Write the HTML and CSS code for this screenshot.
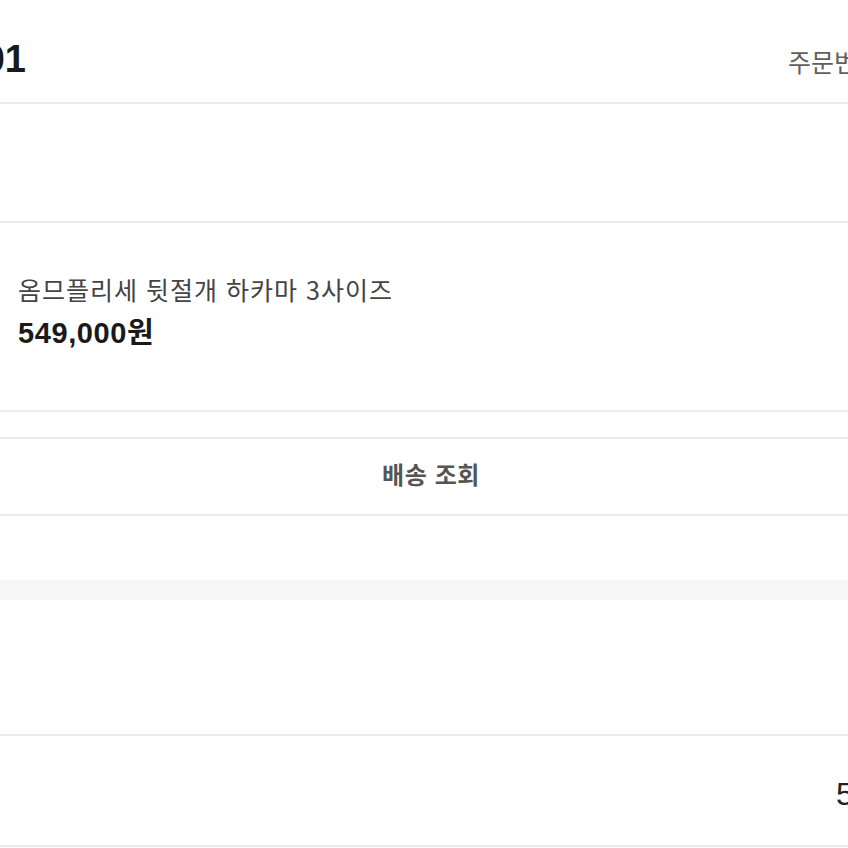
FILE: index.html
```html
<!DOCTYPE html>
<html lang="ko">
<head>
<meta charset="utf-8">
<title>주문 상세</title>
<link rel="stylesheet" href="styles.css">
</head>
<body>
<main class="page">
  <header class="order-head">
    <div class="date-box"><span class="date">2024.03.01</span></div>
    <div class="order-no">주문번호 20240301-0001234</div>
  </header>
  <section class="status"></section>
  <section class="product">
    <p class="product-name">옴므플리세 뒷절개 하카마 3사이즈</p>
    <p class="product-price">549,000원</p>
  </section>
  <div class="btn-wrap">
    <button class="track-btn" type="button">배송 조회</button>
  </div>
  <div class="spacer"></div>
  <div class="band"></div>
  <section class="pay-info"></section>
  <section class="total-row">
    <span class="total-price">549,000원</span>
  </section>
</main>
</body>
</html>
```
FILE: styles.css
```css
* { box-sizing: border-box; }
html, body { margin: 0; padding: 0; background: #fff; }
body {
  overflow: hidden;
  width: 848px;
  height: 848px;
  font-family: "Liberation Sans", "Noto Sans CJK KR", sans-serif;
  color: #1a1a1a;
}
.page { display: flex; flex-direction: column; width: 848px; }
p { margin: 0; }

.order-head {
  display: flex;
  align-items: baseline;
  height: 104px;
  padding-top: 40px;
  border-bottom: 2px solid #ebebeb;
  white-space: nowrap;
}
.date-box {
  width: 26px;
  display: flex;
  justify-content: flex-end;
  flex-shrink: 0;
}
.date {
  font-size: 38px;
  line-height: 38px;
  font-weight: 700;
  color: #1a1a1a;
}
.order-no {
  margin-left: 762px;
  font-family: "Noto Sans CJK KR", sans-serif;
  font-size: 25px;
  color: #5f5f5f;
  flex-shrink: 0;
}

.status {
  height: 119px;
  border-bottom: 2px solid #ebebeb;
}

.product {
  height: 189px;
  padding: 48px 0 0 18px;
  border-bottom: 2px solid #eeeeee;
  white-space: nowrap;
}
.product-name {
  font-family: "Noto Sans CJK KR", sans-serif;
  font-size: 25px;
  line-height: 36px;
  letter-spacing: 1px;
  color: #444;
}
.product-price {
  margin-top: 9px;
  font-size: 29px;
  line-height: 34px;
  font-weight: 700;
  letter-spacing: 0.6px;
  color: #1a1a1a;
}

.btn-wrap { padding-top: 25px; }
.track-btn {
  display: flex;
  align-items: center;
  justify-content: center;
  width: 100%;
  height: 79px;
  margin: 0;
  padding: 0 0 6px 14px;
  background: #fff;
  border: 0;
  border-top: 2px solid #ebebeb;
  border-bottom: 2px solid #ebebeb;
  font-family: "Noto Sans CJK KR", sans-serif;
  font-size: 24px;
  font-weight: 700;
  color: #555;
  letter-spacing: 0.6px;
}

.spacer { height: 64px; }
.band { height: 20px; background: #f6f6f6; }
.pay-info {
  height: 136px;
  border-bottom: 2px solid #ebebeb;
}
.total-row {
  display: flex;
  align-items: center;
  height: 111px;
  border-bottom: 2px solid #ebebeb;
  white-space: nowrap;
}
.total-price {
  margin-left: 836px;
  font-size: 32px;
  font-weight: 400;
  color: #222;
  flex-shrink: 0;
}
```
